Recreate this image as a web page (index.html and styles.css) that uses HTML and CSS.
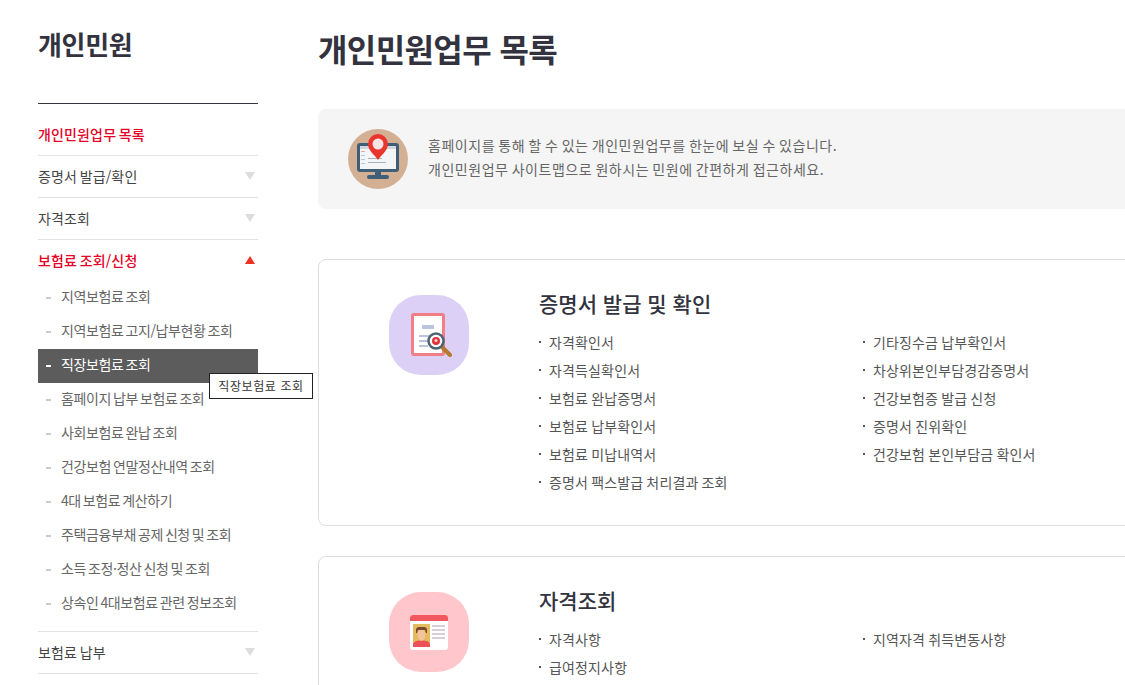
FILE: index.html
```html
<!DOCTYPE html>
<html lang="ko">
<head>
    <meta charset="UTF-8">
    <title>개인민원업무 목록</title>
    <link rel="stylesheet" href="styles.css">
</head>
<body>
<div class="page">
    <aside class="side">
        <h2 class="sideTitle">개인민원</h2>
        <ul class="menu">
            <li class="menuItem on"><span>개인민원업무 목록</span></li>
            <li class="menuItem"><span>증명서 발급/확인</span><i class="arrow"></i></li>
            <li class="menuItem"><span>자격조회</span><i class="arrow"></i></li>
            <li class="menuItem on open"><span>보험료 조회/신청</span><i class="arrow up"></i></li>
            <li class="subWrap">
                <ul class="subMenu">
                    <li>지역보험료 조회</li>
                    <li>지역보험료 고지/납부현황 조회</li>
                    <li class="current">직장보험료 조회<div class="tip">직장보험료 조회</div></li>
                    <li>홈페이지 납부 보험료 조회</li>
                    <li>사회보험료 완납 조회</li>
                    <li>건강보험 연말정산내역 조회</li>
                    <li>4대 보험료 계산하기</li>
                    <li>주택금융부채 공제 신청 및 조회</li>
                    <li>소득 조정·정산 신청 및 조회</li>
                    <li>상속인 4대보험료 관련 정보조회</li>
                </ul>
            </li>
            <li class="menuItem"><span>보험료 납부</span><i class="arrow"></i></li>
        </ul>
    </aside>

    <main class="content">
        <h1 class="pageTitle">개인민원업무 목록</h1>

        <div class="banner">
            <div class="bannerIcon">
                <svg width="60" height="60" viewBox="0 0 60 60">
                    <circle cx="30" cy="30" r="30" fill="#d3b094"/>
                    <rect x="9" y="14" width="42" height="29" rx="3" fill="#3f5f78"/>
                    <rect x="12" y="17" width="36" height="23" fill="#f4f5f6"/>
                    <rect x="12" y="17" width="36" height="3" fill="#cfd6dc"/>
                    <rect x="13" y="22" width="4" height="1" fill="#e8a8a0"/>
                    <rect x="13" y="26" width="4" height="1" fill="#bcc6ce"/>
                    <rect x="13" y="30" width="4" height="1" fill="#bcc6ce"/>
                    <rect x="13" y="34" width="4" height="1" fill="#bcc6ce"/>
                    <rect x="20" y="29" width="14" height="1" fill="#a8b2ba"/>
                    <rect x="20" y="33" width="18" height="1" fill="#a8b2ba"/>
                    <rect x="27" y="43" width="6" height="4" fill="#3f5f78"/>
                    <rect x="19" y="46" width="22" height="4" rx="2" fill="#3f5f78"/>
                    <path d="M30 31c-2-4-10-9-10-16a10 10 0 0 1 20 0c0 7-8 12-10 16z" fill="#e8352e"/>
                    <circle cx="30" cy="15" r="5.500" fill="#fbe3e3"/>
                </svg>
            </div>
            <p class="bannerText">홈페이지를 통해 할 수 있는 개인민원업무를 한눈에 보실 수 있습니다.<br>개인민원업무 사이트맵으로 원하시는 민원에 간편하게 접근하세요.</p>
        </div>

        <section class="card">
            <div class="cardIcon purple">
                <svg width="46" height="46" viewBox="0 0 46 46">
                    <rect x="5" y="1" width="34" height="43" rx="3" fill="#f27f85"/>
                    <rect x="8" y="4" width="28" height="37" fill="#fff"/>
                    <rect x="16" y="13" width="12" height="4" fill="#bcc3dd"/>
                    <rect x="13" y="23" width="12" height="2" fill="#bcc3dd"/>
                    <rect x="13" y="28" width="9" height="2" fill="#bcc3dd"/>
                    <rect x="13" y="33" width="9" height="2" fill="#bcc3dd"/>
                    <path d="M36 35l8 8" stroke="#b5792c" stroke-width="4" stroke-linecap="round"/>
                    <circle cx="30" cy="29" r="7.500" fill="#fff" stroke="#4c6474" stroke-width="2.500"/>
                    <circle cx="30" cy="29" r="4" fill="#e3343c"/>
                    <circle cx="30" cy="28.500" r="1.500" fill="#fbdada"/>
                </svg>
            </div>
            <div class="cardBody">
                <h3 class="cardTitle">증명서 발급 및 확인</h3>
                <ul class="linkList">
                    <li>자격확인서</li>
                    <li>기타징수금 납부확인서</li>
                    <li>자격득실확인서</li>
                    <li>차상위본인부담경감증명서</li>
                    <li>보험료 완납증명서</li>
                    <li>건강보험증 발급 신청</li>
                    <li>보험료 납부확인서</li>
                    <li>증명서 진위확인</li>
                    <li>보험료 미납내역서</li>
                    <li>건강보험 본인부담금 확인서</li>
                    <li>증명서 팩스발급 처리결과 조회</li>
                </ul>
            </div>
        </section>

        <section class="card">
            <div class="cardIcon pink">
                <svg width="38" height="36" viewBox="0 0 38 36">
                    <rect y="1" width="38" height="35" rx="3" fill="#fff"/>
                    <path d="M0 7V4a3 3 0 0 1 3-3h32a3 3 0 0 1 3 3v3z" fill="#f1595f"/>
                    <rect x="3" y="10" width="17" height="23" fill="#e3bc5e"/>
                    <ellipse cx="11.500" cy="21" rx="3.800" ry="5.500" fill="#f6c3a0"/>
                    <path d="M6 19v-4a3 3 0 0 1 3-2h5a3 3 0 0 1 3 2v4l-1 0-1-3H8l-1 3z" fill="#7a4a30"/>
                    <path d="M3 33v-3c1-3 4-3 6-3.500l2.500 .5 2.500-.5c2 .5 5 .5 6 3.500v3z" fill="#ee5258"/>
                    <rect x="22" y="11" width="13" height="2" fill="#d9cdd6"/>
                    <rect x="22" y="15" width="13" height="2" fill="#d9cdd6"/>
                    <rect x="22" y="19" width="13" height="2" fill="#d9cdd6"/>
                    <rect x="22" y="23" width="13" height="2" fill="#d9cdd6"/>
                </svg>
            </div>
            <div class="cardBody">
                <h3 class="cardTitle">자격조회</h3>
                <ul class="linkList">
                    <li>자격사항</li>
                    <li>지역자격 취득변동사항</li>
                    <li>급여정지사항</li>
                </ul>
            </div>
        </section>
    </main>
</div>
</body>
</html>
```

FILE: styles.css
```css
html, body {
    margin: 0;
    padding: 0;
    width: 1125px;
    height: 685px;
    overflow: hidden;
    background-color: #ffffff;
}

body {
    font-family: "Noto Sans CJK KR", "Noto Sans", sans-serif;
    color: #333333;
}

ul {
    list-style: none;
    margin: 0;
    padding: 0;
}

.page {
    display: flex;
    width: 1125px;
    height: 685px;
    overflow: hidden;
    padding-left: 38px;
    box-sizing: border-box;
}

/* left menu */
.side {
    width: 220px;
    flex-shrink: 0;
    margin-right: 60px;
}

.sideTitle {
    margin: 0;
    height: 104px;
    padding-top: 20px;
    box-sizing: border-box;
    font-size: 26px;
    line-height: 48px;
    font-weight: 700;
    letter-spacing: -0.3px;
    color: #333340;
    border-bottom: 1px solid #333340;
}

.menuItem {
    display: flex;
    justify-content: space-between;
    align-items: center;
    box-sizing: border-box;
    height: 42px;
    padding-bottom: 2px;
    border-bottom: 1px solid #e2e2e2;
    font-size: 14px;
    letter-spacing: 0.15px;
    word-spacing: -1.5px;
    color: #444444;
}

.menuItem:first-child {
    height: 52px;
    padding-top: 8px;
    padding-bottom: 0;
}

.menuItem.on {
    color: #e60026;
    font-weight: 500;
}

.menuItem.open {
    height: 41px;
    padding-bottom: 2px;
    border-bottom: none;
}

.arrow {
    width: 0;
    height: 0;
    margin-right: 3px;
    border-left: 5px solid transparent;
    border-right: 5px solid transparent;
    border-top: 8px solid #dddddd;
}

.arrow.up {
    border-top: none;
    border-bottom: 8px solid #f03020;
}

.subWrap {
    padding-bottom: 10px;
    border-bottom: 1px solid #e2e2e2;
}

.subMenu li {
    position: relative;
    height: 34px;
    line-height: 30px;
    padding-left: 23px;
    font-size: 14px;
    letter-spacing: -0.4px;
    word-spacing: -1.5px;
    color: #666666;
}

.subMenu li::before {
    content: "";
    position: absolute;
    left: 8px;
    top: 16px;
    width: 5px;
    height: 2px;
    background-color: #cccccc;
}

.subMenu li.current {
    background-color: #5c5c5c;
    color: #ffffff;
}

.subMenu li.current::before {
    background-color: #ffffff;
}

.tip {
    position: absolute;
    left: 171px;
    top: 24px;
    width: 104px;
    height: 26px;
    box-sizing: border-box;
    border: 1px solid #222222;
    background-color: #ffffff;
    color: #333333;
    font-size: 12px;
    line-height: 24px;
    letter-spacing: 0.6px;
    word-spacing: 0;
    text-align: center;
}

/* right side */
.content {
    width: 900px;
    flex-shrink: 0;
}

.pageTitle {
    margin: 0 0 37px;
    padding-top: 24px;
    font-size: 32px;
    line-height: 48px;
    font-weight: 700;
    letter-spacing: -0.6px;
    color: #333340;
}

.banner {
    display: flex;
    align-items: center;
    height: 100px;
    padding-left: 30px;
    margin-bottom: 50px;
    border-radius: 8px;
    background-color: #f5f5f5;
}

.bannerIcon {
    width: 60px;
    height: 60px;
    margin-right: 20px;
}

.bannerText {
    margin: 0;
    padding-bottom: 4px;
    font-size: 14px;
    line-height: 24px;
    letter-spacing: 0.53px;
    word-spacing: -1.2px;
    color: #666666;
}

.card {
    display: flex;
    box-sizing: border-box;
    height: 267px;
    margin-bottom: 30px;
    padding-top: 35px;
    border: 1px solid #dddddd;
    border-radius: 8px;
}

.cardIcon {
    display: flex;
    align-items: center;
    justify-content: center;
    width: 80px;
    height: 80px;
    margin: 0 70px;
    border-radius: 32px;
    flex-shrink: 0;
}

.cardIcon.purple {
    background-color: #dcd0f7;
}

.cardIcon.pink {
    background-color: #ffc6cb;
}

.cardTitle {
    margin: -2px 0 15px;
    font-size: 21px;
    line-height: 20px;
    font-weight: 500;
    color: #333340;
}

.linkList {
    display: grid;
    grid-template-columns: 324px 324px;
    grid-auto-rows: 28px;
}

.linkList li {
    position: relative;
    padding-left: 10px;
    font-size: 14px;
    line-height: 28px;
    letter-spacing: 0.15px;
    word-spacing: -1px;
    color: #555555;
}

.linkList li::before {
    content: "";
    position: absolute;
    left: 0;
    top: 13px;
    width: 2px;
    height: 2px;
    background-color: #555555;
}
```
